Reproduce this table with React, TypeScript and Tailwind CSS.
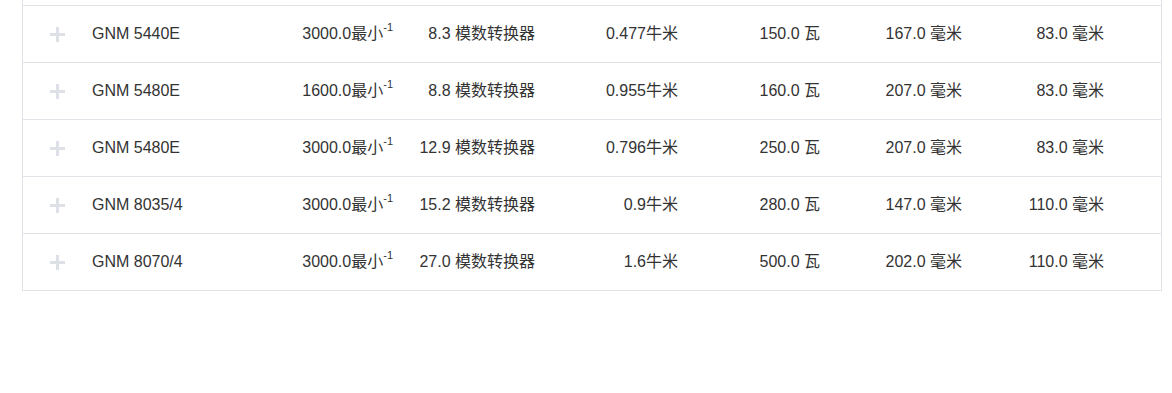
const rows = [
  { model: "GNM 5440E", speed: "3000.0", torque: "8.3", nm: "0.477", power: "150.0", len: "167.0", dia: "83.0" },
  { model: "GNM 5480E", speed: "1600.0", torque: "8.8", nm: "0.955", power: "160.0", len: "207.0", dia: "83.0" },
  { model: "GNM 5480E", speed: "3000.0", torque: "12.9", nm: "0.796", power: "250.0", len: "207.0", dia: "83.0" },
  { model: "GNM 8035/4", speed: "3000.0", torque: "15.2", nm: "0.9", power: "280.0", len: "147.0", dia: "110.0" },
  { model: "GNM 8070/4", speed: "3000.0", torque: "27.0", nm: "1.6", power: "500.0", len: "202.0", dia: "110.0" },
];

const PlusIcon = () => (
  <svg width="15" height="15" viewBox="0 0 15 15" className="block">
    <rect x="6" y="0" width="3" height="15" fill="#dde1e7" />
    <rect x="0" y="6" width="15" height="3" fill="#dde1e7" />
  </svg>
);

export default function App() {
  return (
    <div
      className="bg-white w-[1172px] h-[393px] text-[16px] text-[#333]"
      style={{ fontFamily: '"Liberation Sans", Arial, "Noto Sans CJK SC", sans-serif' }}
    >
      <div className="ml-[22px] w-[1140px] border-x border-b border-[#e2e2e8]">
        <div className="h-[5px]" />
        {rows.map((r, i) => (
          <div key={i} className="flex items-center h-[57px] border-t border-[#e2e2e8]">
            <div className="w-[69px] flex justify-center">
              <PlusIcon />
            </div>
            <div className="w-[159px]">{r.model}</div>
            <div className="w-[142px] text-right">
              {r.speed}最小<sup className="text-[11px] -top-[0.75em]">-1</sup>
            </div>
            <div className="w-[142px] text-right">{r.torque} 模数转换器</div>
            <div className="w-[143px] text-right">{r.nm}牛米</div>
            <div className="w-[142px] text-right">{r.power} 瓦</div>
            <div className="w-[142px] text-right">{r.len} 毫米</div>
            <div className="w-[142px] text-right">{r.dia} 毫米</div>
          </div>
        ))}
      </div>
    </div>
  );
}
